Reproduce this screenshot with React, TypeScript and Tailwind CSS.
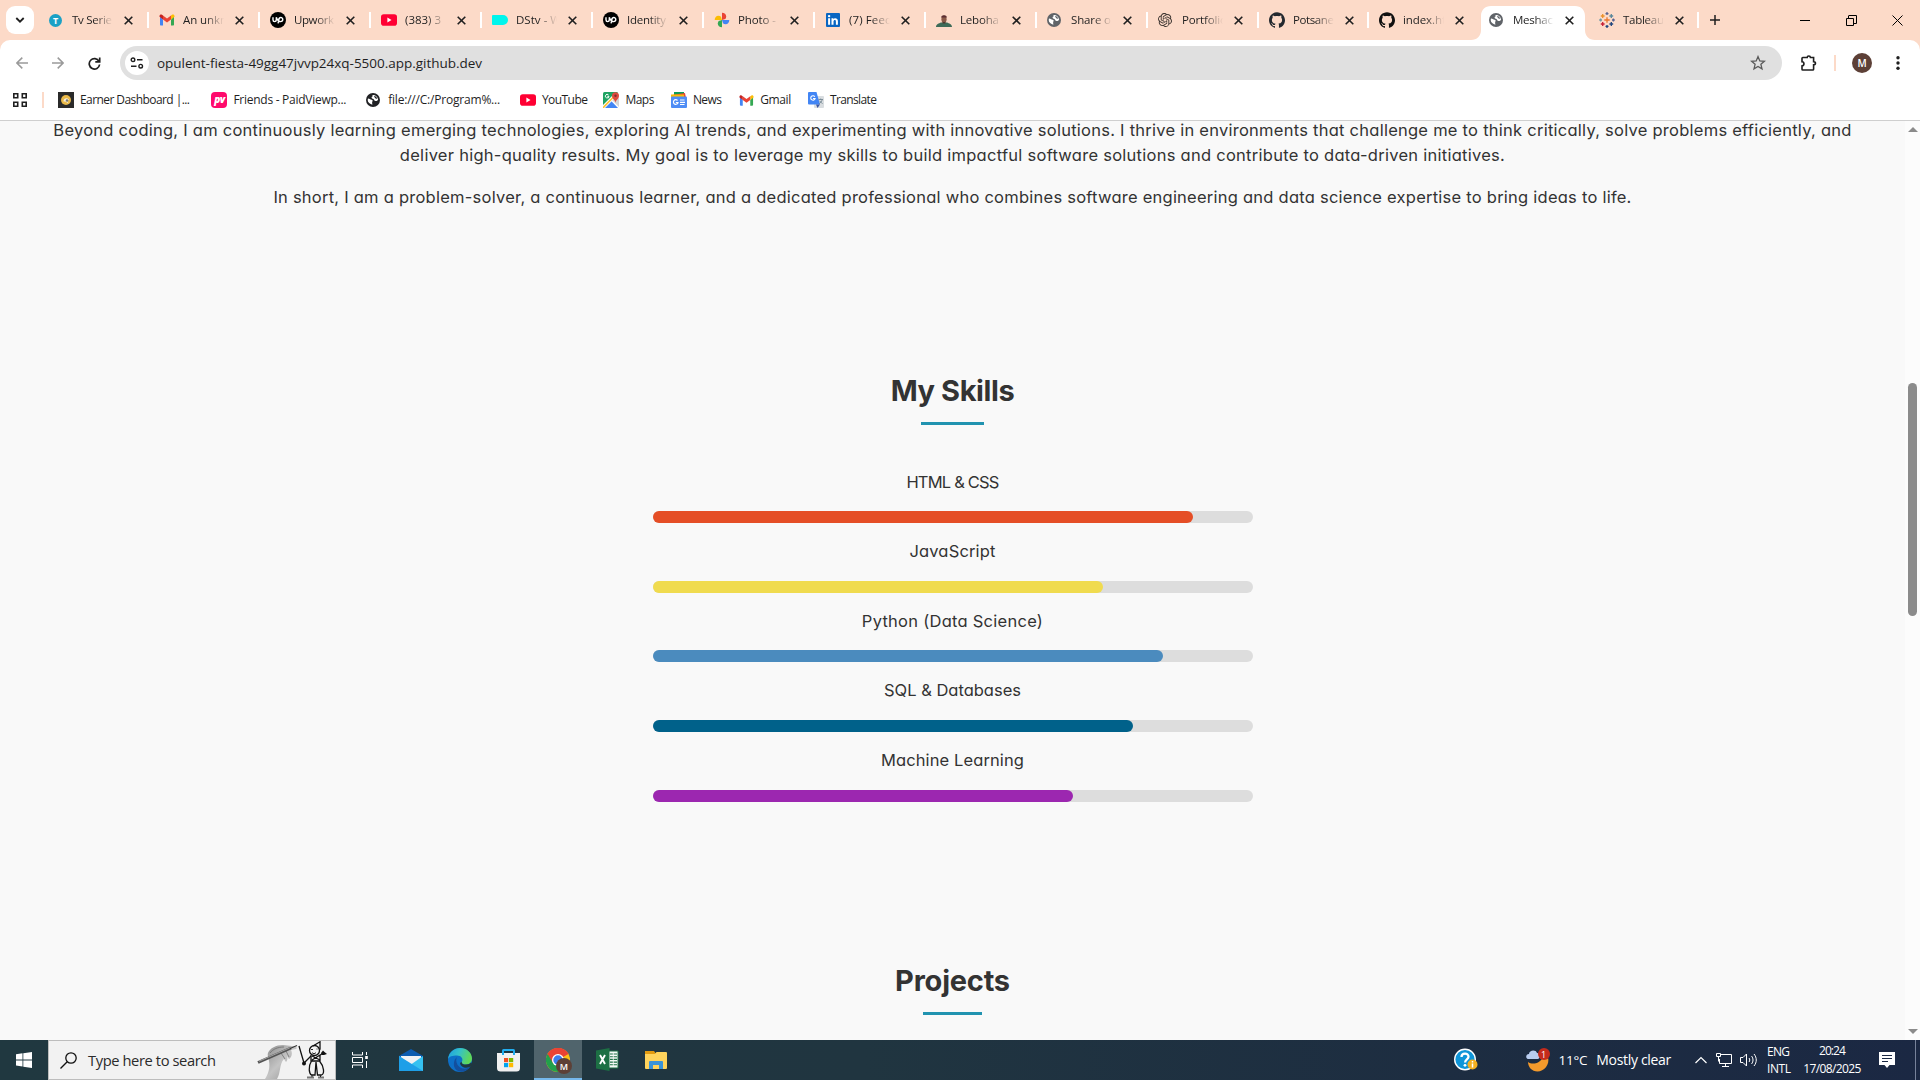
import React, { useLayoutEffect, useRef, useState } from "react";
import { SiGithub, SiOpenai } from "react-icons/si";

type FitProps = { text: string; width: number; className?: string };

/* Single line of text, tracked so that it fills the given width. */
function Fit({ text, width, className = "" }: FitProps) {
  const ref = useRef<HTMLSpanElement>(null);
  const [spacing, setSpacing] = useState(0);
  useLayoutEffect(() => {
    const measure = () => {
      const el = ref.current;
      if (!el) return;
      el.style.letterSpacing = "0px";
      const natural = el.getBoundingClientRect().width;
      const next = (width - natural) / Math.max(1, text.length - 1);
      el.style.letterSpacing = `${next}px`;
      setSpacing(next);
    };
    measure();
    document.fonts?.ready.then(measure);
  }, [text, width]);
  return (
    <span ref={ref} className={`inline-block whitespace-nowrap ${className}`} style={{ letterSpacing: spacing }}>
      {text}
    </span>
  );
}

function Globe({ color, size }: { color: string; size: number }) {
  return (
    <svg width={size} height={size} viewBox="0 0 14 14">
      <circle cx="7" cy="7" r="7" fill={color} />
      <path d="M2 5.600c1.600.2 2.200 1 3.600 1.100 1 .1 1.300.8.9 1.600-.6 1-.3 1.900-.1 3.400C4 11.300 1.700 9.300 1.700 7z" fill="#fff" />
      <path d="M6.200 2.200c2.600-.5 5.600 1.200 5.900 4.500-.8 1.300-2 1.500-3.200 1.100-1-.3-.5-1.600-1.500-1.900-1.200-.3-2-.8-1.800-1.700.2-.7 1.200-.5 1.300-1.100z" fill="#fff" />
      <path d="M8.200 3.100c1.400.2 2.500 1.100 2.900 2.500-.9.400-1.700.1-2-.5-.3-.7-1.100-.9-.9-2z" fill={color} />
    </svg>
  );
}

function GmailIcon({ size, className = "" }: { size: number; className?: string }) {
  return (
    <svg className={className} width={size} height={size} viewBox="0 0 16 16">
      <path d="M1 4.500v8c0 .6.400 1 1 1h2V7.500z" fill="#4285f4" />
      <path d="M15 4.500v8c0 .6-.4 1-1 1h-2V7.500z" fill="#34a853" />
      <path d="M12 3.500v4l3.500-2.700V4c0-1.400-1.500-2-2.500-1.200z" fill="#fbbc04" />
      <path d="M4 3.500l4 3 4-3v4l-4 3-4-3z" fill="#ea4335" />
      <path d="M.5 4.800V4C.5 2.600 2 2 3 2.800l1 .7v4z" fill="#c5221f" />
    </svg>
  );
}

function YouTubeIcon() {
  return (
    <svg width="16" height="16" viewBox="0 0 16 16">
      <rect y="2.300" width="16" height="11.400" rx="2.800" fill="#ff0033" />
      <path d="M6.400 5.600v4.800L10.500 8z" fill="#fff" />
    </svg>
  );
}

function UpworkIcon() {
  return (
    <svg width="16" height="16" viewBox="0 0 16 16">
      <circle cx="8" cy="8" r="8" fill="#000" />
      <path d="M3 5.300v2.500c0 2.400 3.300 2.400 3.300 0V5.300M6.300 5.300c.8 2.300 1.900 4.300 4.200 4.300 3 0 3-4.100.2-4.100-2 0-2 1.800-2.600 5.900" fill="none" stroke="#fff" strokeWidth="1.400" />
    </svg>
  );
}

function PhotosIcon() {
  return (
    <svg width="16" height="16" viewBox="0 0 16 16">
      <path d="M8 8V.7c2.500 0 4.200 1.500 4.200 3.700 0 1-.4 2-.9 2.600L8 8z" fill="#ea4335" />
      <path d="M8 8h7.300c0 2.500-1.500 4.200-3.700 4.200-1 0-2-.4-2.600-.9z" fill="#4285f4" />
      <path d="M8 8v7.300c-2.500 0-4.200-1.500-4.200-3.700 0-1 .4-2 .9-2.600z" fill="#34a853" />
      <path d="M8 8H.7c0-2.500 1.500-4.200 3.700-4.200 1 0 2 .4 2.600.9z" fill="#fbbc04" />
    </svg>
  );
}

function LinkedInIcon() {
  return (
    <svg width="16" height="16" viewBox="0 0 16 16">
      <rect x="1" y="1" width="14" height="14" rx="1" fill="#0a66c2" />
      <path d="M3.100 6.300h2v6.500h-2zM6.500 6.300h1.900v.9c.9-1.600 4.500-1.500 4.500 1.700v3.900h-2V9.500c0-2.200-2.400-1.900-2.400 0v3.300h-2z" fill="#fff" />
      <circle cx="4.100" cy="4.100" r="1.200" fill="#fff" />
    </svg>
  );
}

function PersonIcon() {
  return (
    <svg width="16" height="16" viewBox="0 0 16 16">
      <path d="M0 15c0-3 3-3.600 5-4.500h6c2 .9 5 1.500 5 4.500z" fill="#3d6b58" />
      <ellipse cx="8" cy="7.200" rx="2.600" ry="3.600" fill="#8a5a48" />
      <path d="M5.200 5.600C5 2.500 11 2.500 10.800 5.600z" fill="#5b2f33" />
      <path d="M6.500 10h3v1.500h-3z" fill="#4d3a30" />
    </svg>
  );
}

function TableauIcon() {
  const marks: [number, number, number, string][] = [
    [8, 8, 2.7, "#e8762c"],
    [3.7, 4, 1.9, "#eb9129"],
    [12.3, 4, 1.9, "#59879b"],
    [3.7, 12, 1.9, "#c72037"],
    [12.3, 12, 1.9, "#1f457e"],
    [8, 1.6, 1.5, "#5b6591"],
    [8, 14.4, 1.5, "#1f457e"],
    [1.6, 8, 1.4, "#7099a6"],
    [14.4, 8, 1.4, "#5b6591"],
  ];
  return (
    <svg width="16" height="16" viewBox="0 0 16 16">
      {marks.map(([x, y, r, c]) => (
        <path key={`${x}-${y}`} d={`M${x - r} ${y}h${2 * r}M${x} ${y - r}v${2 * r}`} stroke={c} strokeWidth="1.300" />
      ))}
    </svg>
  );
}

function CloseX() {
  return (
    <svg width="9" height="9" viewBox="0 0 9 9">
      <path d="M.7.7l7.600 7.600M8.300.7L.7 8.300" stroke="#1f1f1f" strokeWidth="1.600" />
    </svg>
  );
}

type Tab = { title: string; width: number; icon: React.ReactNode; active?: boolean; wide?: boolean };

const tabs: Tab[] = [
  {
    title: "Tv Serie",
    width: 40,
    wide: true,
    icon: (
      <span className="ml-[1px] flex h-[13px] w-[13px] items-center justify-center rounded-full bg-[#1ba1c5] text-[9px] font-bold leading-none text-white">
        T
      </span>
    ),
  },
  { title: "An unkn", width: 44, wide: true, icon: <GmailIcon size={16} /> },
  { title: "Upwork", width: 40, wide: true, icon: <UpworkIcon /> },
  { title: "(383) 3", width: 36, wide: true, icon: <YouTubeIcon /> },
  { title: "DStv - W", width: 45, wide: true, icon: <span className="h-[10px] w-4 rounded-l-[1px] rounded-r-[5px] bg-[#00f5ec]" /> },
  { title: "Identity", width: 39, wide: true, icon: <UpworkIcon /> },
  { title: "Photo -", width: 38, wide: true, icon: <PhotosIcon /> },
  { title: "(7) Feed", width: 43, wide: true, icon: <LinkedInIcon /> },
  { title: "Leboha", width: 39, wide: true, icon: <PersonIcon /> },
  { title: "Share o", width: 40, wide: true, icon: <Globe color="#5f6368" size={14} /> },
  { title: "Portfolio", width: 45, wide: true, icon: <SiOpenai size={14} color="#3b332f" /> },
  { title: "Potsane", width: 41, icon: <SiGithub size={16} color="#24292f" /> },
  { title: "index.ht", width: 43, icon: <SiGithub size={16} color="#111" /> },
  { title: "Meshac", width: 40, icon: <Globe color="#5f6368" size={14} />, active: true },
  { title: "Tableau", width: 41, icon: <TableauIcon /> },
];

function TabItem({ tab, separator }: { tab: Tab; separator: boolean }) {
  return (
    <div className={`relative flex h-10 shrink-0 items-center ${tab.wide ? "w-[111px]" : "w-[110px]"}`}>
      {tab.active && (
        <svg className="absolute -left-[6px] top-[6px]" width="124" height="34" viewBox="0 0 124 34">
          <path d="M0 34c6 0 10-4 10-10V10C10 4 14 0 20 0h84c6 0 10 4 10 10v14c0 6 4 10 10 10z" fill="#fff" />
        </svg>
      )}
      <span className={`h-4 w-[2px] ${separator ? "bg-white" : "bg-transparent"}`} />
      <span className="relative ml-[10px] flex w-4 items-center justify-start">{tab.icon}</span>
      <span
        className="relative ml-2 flex w-[52px] overflow-hidden text-[11.500px] leading-[18px] text-[#1f1f1f] [mask-image:linear-gradient(90deg,#000_22px,transparent_41px)]"
      >
        <Fit text={tab.title} width={tab.width} />
      </span>
      <span className="relative">
        <CloseX />
      </span>
    </div>
  );
}

function TabStrip() {
  return (
    <div className="flex h-10 items-center">
      <div className="ml-[6px] flex h-7 w-7 items-center justify-center rounded-[9px] bg-white">
        <svg width="10" height="8" viewBox="0 0 10 8">
          <path d="M1.300 2L5 5.700 8.700 2" fill="none" stroke="#1f1f1f" strokeWidth="1.800" />
        </svg>
      </div>
      <div className="ml-[2px] flex">
        {tabs.map((tab, i) => (
          <TabItem key={tab.title} tab={tab} separator={i > 0 && i < 13} />
        ))}
      </div>
      <span className="h-4 w-[2px] bg-white" />
      <svg className="ml-[11px]" width="10" height="10" viewBox="0 0 10 10">
        <path d="M5 0v10M0 5h10" stroke="#1f1f1f" strokeWidth="1.500" />
      </svg>
      <div className="ml-auto flex h-10 items-center pr-[17px]">
        <span className="h-px w-[10px] bg-black" />
        <svg className="ml-9" width="11" height="11" viewBox="0 0 11 11">
          <path d="M.5 3.500h7v7h-7zM2.500 3.500v-2.500a.5.5 0 0 1 .5-.5h7.500v8h-3" fill="none" stroke="#000" />
        </svg>
        <svg className="ml-[35px]" width="11" height="11" viewBox="0 0 11 11">
          <path d="M.5.5l10 10M10.500.5l-10 10" stroke="#000" />
        </svg>
      </div>
    </div>
  );
}

function Toolbar() {
  return (
    <div className="flex h-[46px] items-center">
      <svg className="ml-4" width="12" height="12" viewBox="0 0 12 12">
        <path d="M12 6H1M6.300.6L.9 6l5.400 5.400" fill="none" stroke="#9a9a9a" strokeWidth="1.500" />
      </svg>
      <svg className="ml-6" width="12" height="12" viewBox="0 0 12 12">
        <path d="M0 6h11M5.700.6L11.100 6l-5.400 5.400" fill="none" stroke="#9a9a9a" strokeWidth="1.500" />
      </svg>
      <svg className="ml-6" width="13" height="13" viewBox="0 0 13 13">
        <path d="M11 4.300A5.200 5.200 0 1 0 11.600 7.500M11.700.4v4.400H7.300" fill="none" stroke="#1f1f1f" strokeWidth="1.700" />
      </svg>
      <div className="ml-[19px] flex h-[34px] w-[1662px] items-center rounded-full bg-[#e0e0e0]">
        <span className="ml-[5px] flex h-6 w-6 items-center justify-center rounded-full bg-white">
          <svg width="14" height="12" viewBox="0 0 14 12" fill="none" stroke="#1f1f1f" strokeWidth="1.400">
            <circle cx="3" cy="2.800" r="1.800" />
            <path d="M7 2.800h5.500M1 9.200h5.500" />
            <circle cx="10.700" cy="9.200" r="1.800" />
          </svg>
        </span>
        <Fit text="opulent-fiesta-49gg47jvvp24xq-5500.app.github.dev" width={325} className="ml-2 text-[13.500px] leading-5 text-[#1f1f1f]" />
        <svg className="ml-auto mr-[16px]" width="16" height="16" viewBox="0 0 16 16">
          <path d="M8 1.600l1.800 4.300 4.600.4-3.500 3 1.100 4.500L8 11.400l-4 2.400 1.100-4.500-3.500-3 4.600-.4z" fill="none" stroke="#5a5a5a" strokeWidth="1.300" />
        </svg>
      </div>
      <svg className="ml-[18px]" width="18" height="18" viewBox="0 0 18 18">
        <path
          d="M2.800 3.500h4.400c0-2 3.200-2 3.200 0h3.200v4.200c2.500 0 2.500 3.200 0 3.200v4.300c0 .5-.3.800-.8.800h-10c-.5 0-.8-.3-.8-.8v-3.300c2.600-.2 2.600-4 0-4.200V4.300c0-.5.300-.8.8-.8z"
          fill="none"
          stroke="#1f1f1f"
          strokeWidth="1.600"
        />
      </svg>
      <span className="ml-4 h-4 w-[2px] bg-[#fcdac8]" />
      <span className="ml-4 flex h-5 w-5 items-center justify-center rounded-full bg-[#5d4037] text-[10px] font-semibold text-white">M</span>
      <svg className="ml-[24px]" width="4" height="14" viewBox="0 0 4 14" fill="#1f1f1f">
        <circle cx="2" cy="1.700" r="1.700" />
        <circle cx="2" cy="7" r="1.700" />
        <circle cx="2" cy="12.300" r="1.700" />
      </svg>
    </div>
  );
}

function Bookmark({ icon, text, width, gap }: { icon: React.ReactNode; text: string; width: number; gap: string }) {
  return (
    <div className={`flex items-center ${gap}`}>
      <span className="flex w-[22px] items-center">{icon}</span>
      <Fit text={text} width={width} className="text-[12px] leading-[18px] text-[#1f1f1f]" />
    </div>
  );
}

function BookmarksBar() {
  return (
    <div className="flex h-[34px] items-center pb-[6px]">
      <svg className="ml-[13px]" width="14" height="14" viewBox="0 0 14 14" fill="none" stroke="#1f1f1f" strokeWidth="1.600">
        <path d="M.8.8h3.900v3.900H.8zM9.300.8h3.900v3.900H9.300zM.8 9.300h3.900v3.900H.8zM9.300 9.300h3.900v3.900H9.300z" />
      </svg>
      <span className="ml-[15px] h-4 w-[2px] bg-[#fcdac8]" />
      <Bookmark
        gap="ml-[14px]"
        text="Earner Dashboard |..."
        width={110}
        icon={
          <svg width="16" height="16" viewBox="0 0 16 16">
            <rect width="16" height="16" fill="#2a2a2a" />
            <circle cx="8" cy="8" r="5" fill="#e9b949" />
            <path d="M5.500 9.500c0-4 4.500-4 5.500-1.500l-2 .5 1.500 3-3-2z" fill="#f5efe0" />
            <circle cx="9" cy="8.500" r="1.200" fill="#777" />
          </svg>
        }
      />
      <Bookmark
        gap="ml-[22px]"
        text="Friends - PaidViewp..."
        width={113}
        icon={
          <span className="flex h-4 w-4 items-center justify-center rounded-[4px] bg-[#ff0a6c] pb-[2px] text-[10px] font-extrabold italic leading-none tracking-[-0.500px] text-white">
            pv
          </span>
        }
      />
      <Bookmark gap="ml-[20px]" text="file:///C:/Program%..." width={112} icon={<Globe color="#202124" size={14} />} />
      <Bookmark gap="ml-[20px]" text="YouTube" width={46} icon={<YouTubeIcon />} />
      <Bookmark
        gap="ml-[16px]"
        text="Maps"
        width={29}
        icon={
          <svg width="16" height="16" viewBox="0 0 16 16">
            <path d="M0 1.500Q0 0 1.500 0H15L1.500 16Q0 16 0 14.500z" fill="#1ea362" />
            <path d="M1 16L8 8.800 15 16z" fill="#4285f4" />
            <path d="M0 13L11 2l3 2L2 16H0z" fill="#fff" />
            <path d="M0 14.500L10 4.500l1 1L1 16H0z" fill="#fbc02d" />
            <path d="M9 8l7 7V5z" fill="#d5d5d5" />
            <path d="M12.500 11c0-3-3.500-4-3.500-7.300a3.500 3.500 0 0 1 7 0C16 7 12.500 8 12.500 11z" fill="#dd4b3e" />
            <circle cx="12.500" cy="3.800" r="1.200" fill="#822f2b" />
            <path d="M5.500 2.900A1.800 1.800 0 1 0 6 4.300H4.300" fill="none" stroke="#fff" />
          </svg>
        }
      />
      <Bookmark
        gap="ml-[17px]"
        text="News"
        width={29}
        icon={
          <svg width="16" height="16" viewBox="0 0 16 16">
            <rect x="3" width="10" height="6" fill="#0c9d58" />
            <path d="M1 3l13-2 1 5H1z" fill="#ea4335" />
            <path d="M0 2.500h13V8H0z" fill="#fbbc04" />
            <rect y="4.500" width="16" height="11.500" rx="1" fill="#4f8df5" />
            <path d="M6.500 8.500A2.300 2.300 0 1 0 7 10.500H4.800M9 8h4.500M9 10.300h5M9 12.500h4.500" fill="none" stroke="#fff" strokeWidth="1.200" />
          </svg>
        }
      />
      <Bookmark gap="ml-[17px]" text="Gmail" width={31} icon={<GmailIcon className="ml-[1px]" size={15} />} />
      <Bookmark
        gap="ml-[17px]"
        text="Translate"
        width={47}
        icon={
          <svg width="16" height="16" viewBox="0 0 16 16">
            <rect x="6" y="4" width="10" height="12" rx="1" fill="#d9dde0" />
            <path d="M1 0h7.500l3.500 12.500H1q-1 0-1-1V1q0-1 1-1z" fill="#4285f4" />
            <path d="M8 12.500h4L9.500 16z" fill="#3a57a5" />
            <path d="M6.800 4.700A2.200 2.200 0 1 0 7.100 6.500H5" fill="none" stroke="#fff" strokeWidth="1.100" />
            <path d="M10.500 7.500h4.500M12.700 6.500v1M14.200 7.600c-.5 2-1.500 3-3 4M11.500 8.800l3 3" fill="none" stroke="#6b7f8c" strokeWidth=".8" />
          </svg>
        }
      />
    </div>
  );
}

const skills = [
  { name: "HTML & CSS", width: 93, level: "w-[90%]", color: "bg-[#e54e26]" },
  { name: "JavaScript", width: 86, level: "w-3/4", color: "bg-[#f0db4f]" },
  { name: "Python (Data Science)", width: 181, level: "w-[85%]", color: "bg-[#4b8bbe]" },
  { name: "SQL & Databases", width: 137, level: "w-4/5", color: "bg-[#00618a]" },
  { name: "Machine Learning", width: 143, level: "w-[70%]", color: "bg-[#9c27b0]" },
];

function Page() {
  return (
    <main className="flex min-w-0 flex-1 flex-col items-center bg-[#f9f9f9] font-[Inter,sans-serif] text-[16.500px] leading-[25.600px] text-[#333] [font-feature-settings:'cv11']">
      <p className="mt-[-3.500px] flex flex-col items-center leading-[25px]">
        <Fit
          width={1798}
          text="Beyond coding, I am continuously learning emerging technologies, exploring AI trends, and experimenting with innovative solutions. I thrive in environments that challenge me to think critically, solve problems efficiently, and"
        />
        <Fit
          width={1105}
          text="deliver high-quality results. My goal is to leverage my skills to build impactful software solutions and contribute to data-driven initiatives."
        />
      </p>
      <p className="mt-[17px] h-[25.600px]">
        <Fit
          width={1358}
          text="In short, I am a problem-solver, a continuous learner, and a dedicated professional who combines software engineering and data science expertise to bring ideas to life."
        />
      </p>
      <h2 className="mt-[158.900px] flex h-[46px] items-center pb-[2px] text-[29px] font-bold">
        <Fit text="My Skills" width={124} />
      </h2>
      <div className="mt-[7px] h-[3px] w-[63px] bg-[#2193b0]" />
      <div className="mt-[28.700px] flex w-[600px] flex-col">
        {skills.map((s) => (
          <div key={s.name} className="flex flex-col pt-4 text-center">
            <p className="h-[25.600px]">
              <Fit text={s.name} width={s.width} />
            </p>
            <div className="mt-4 h-3 rounded-[6px] bg-[#ddd]">
              <div className={`h-3 rounded-[6px] ${s.level} ${s.color}`} />
            </div>
          </div>
        ))}
      </div>
      <h2 className="mt-[157.300px] flex h-[46px] items-center pb-[2px] text-[29px] font-bold">
        <Fit text="Projects" width={115} />
      </h2>
      <div className="mt-[7px] h-[3px] w-[59px] bg-[#2193b0]" />
    </main>
  );
}

function Scrollbar() {
  return (
    <div className="flex w-[15px] flex-col items-center bg-[#fcfcfc] py-[6px]">
      <svg width="10" height="5" viewBox="0 0 10 5">
        <path d="M0 5L5 0l5 5z" fill="#8b8b8b" />
      </svg>
      <span className="mt-[251px] h-[233px] w-[9px] rounded-full bg-[#8b8b8b]" />
      <svg className="mt-auto" width="10" height="5" viewBox="0 0 10 5">
        <path d="M0 0l5 5 5-5z" fill="#8b8b8b" />
      </svg>
    </div>
  );
}

function SearchArt() {
  return (
    <svg className="ml-auto mr-[6px]" width="72" height="38" viewBox="0 0 72 38">
      <defs>
        <linearGradient id="hand" x1="0" y1="0" x2="1" y2="1">
          <stop offset="0" stopColor="#8a8a8a" />
          <stop offset=".5" stopColor="#c4c4c4" />
          <stop offset="1" stopColor="#8f8f8f" />
        </linearGradient>
      </defs>
      <path d="M8 38c4-6 5-12 4-18 0-3-2-5-1-8 2-5 8-8 15-8l9 1c4 0 6 2 4 3l-5 1c2 4 0 8-2 9l-2-3c1 3 0 5-1 6l-2-3c-5 5-3 14-7 20z" fill="url(#hand)" />
      <path d="M24 12l4 6M29 10l3 6M13 12c3-4 8-6 14-6" stroke="#6e6e6e" strokeWidth=".8" fill="none" />
      <path d="M1 21.500L34 7" stroke="#555" strokeWidth="3" />
      <path d="M2 20.300L34 6.300" stroke="#aaa" strokeWidth=".9" />
      <path d="M33 7.500l7-3" stroke="#333" strokeWidth="1.200" />
      <g fill="none" stroke="#111" strokeWidth="1.300">
        <path d="M42 5l5 17M47 22l7-7" />
        <circle cx="57.500" cy="9.500" r="5" />
        <path d="M56 5L63 .8v8" />
        <path d="M55 15l8 4M55 19l8-5M54 14v6h9v-6M62 15l4-3M54.500 20c-4 6-2 13 0 14h3.500l1-13M62.500 20c5 6 5 13 2 14h-4l-1.500-13" />
        <path d="M54 8.500h2M59.500 8h1M55 11.500c1 1.500 3 1.500 4 0" strokeWidth=".9" />
      </g>
      <circle cx="47" cy="22.500" r="2" fill="#111" />
      <path d="M66 9.500l1.500 1.500 2.500 2-3 1-2 0-1-2z" fill="#111" />
      <path d="M50 36.500h7M61 36.500h6" stroke="#777" strokeWidth="2" />
      <path d="M55 34v2M63.500 34v2" stroke="#222" strokeWidth="1" />
    </svg>
  );
}

function PinnedApps() {
  return (
    <div className="flex h-10 items-center">
      <svg className="ml-4" width="16" height="16" viewBox="0 0 16 16" fill="none" stroke="#fff">
        <path d="M.5 0v3h10V0M.5 16v-3h10v3M.5 5.500h10v5H.5zM14.500 0v3M14.500 9v7" />
        <path d="M13.200 4h2.600v3h-2.600z" fill="#fff" stroke="none" />
      </svg>
      <svg className="ml-[31px]" width="24" height="24" viewBox="0 0 24 24">
        <path d="M0 8L12 1l12 7v4H0z" fill="#0a5bb0" />
        <path d="M2 8h20v5l-10 6L2 13z" fill="#eef1f4" />
        <path d="M0 8l12 8.500L24 8v15H0z" fill="#35c1f1" />
        <path d="M0 23V8l24 15z" fill="#1e9fe8" />
      </svg>
      <svg className="ml-[25px]" width="24" height="24" viewBox="0 0 24 24">
        <defs>
          <linearGradient id="edgeTop" x1="0" y1="0" x2="1" y2="0.300">
            <stop offset="0" stopColor="#1b9de2" />
            <stop offset=".5" stopColor="#35c1c9" />
            <stop offset="1" stopColor="#5fd85a" />
          </linearGradient>
        </defs>
        <circle cx="12" cy="12" r="12" fill="#0d6fc7" />
        <path d="M0 11C1 4 6 0 12 0c7 0 12 5 12 10.500 0 4-3 6-6 6-3.500 0-5-1.500-4-3 1.500-3-1-6-5-6-4.500 0-8 1-9 3.500z" fill="url(#edgeTop)" />
        <path d="M9 9c-2 4 0 9 4 11 4 1.500 7 .5 9.500-2C19 25 8 26 6 18c-.5-4 .5-7 3-9z" fill="#134f9e" />
        <path d="M14 13.500c-1 1.500.5 3 4 3 2.500 0 4-.8 5-2l1.500 2-3 2.500c-4 2-9 0-9.500-4z" fill="#203840" />
      </svg>
      <svg className="ml-[25px]" width="23" height="24" viewBox="0 0 23 24">
        <path d="M6 7V2.500Q6 2 6.500 2h10q.5 0 .5.500V7" fill="none" stroke="#22aef0" strokeWidth="2" />
        <path d="M0 5h23v15q0 3.500-3.500 3.500h-16Q0 23.500 0 20z" fill="#f1f1f1" />
        <path d="M6 5v2M17 5v2" stroke="#22aef0" strokeWidth="2" />
        <path d="M7 10h4.200v4.200H7z" fill="#f25022" />
        <path d="M12 10h4.200v4.200H12z" fill="#7fba00" />
        <path d="M7 15h4.200v4.200H7z" fill="#00a4ef" />
        <path d="M12 15h4.200v4.200H12z" fill="#ffb900" />
      </svg>
      <div className="ml-[14px] flex h-10 w-12 items-center justify-center border-b-2 border-[#76b9ed] bg-[#50646c] pt-[2px]">
        <div className="relative h-6 w-6">
          <svg width="24" height="24" viewBox="0 0 24 24">
            <circle cx="12" cy="12" r="12" fill="#fbc116" />
            <path d="M12 12L1.600 6A12 12 0 0 1 22.400 6z" fill="#ea4335" />
            <path d="M1.600 6A12 12 0 0 0 12 24l5.200-9L12 12z" fill="#22a04b" />
            <path d="M12 6h10.400A12 12 0 0 0 1.600 6L7 15z" fill="#ea4335" />
            <circle cx="12" cy="12" r="6" fill="#fff" />
            <circle cx="12" cy="12" r="4.700" fill="#3b7ded" />
          </svg>
          <span className="absolute left-[10px] top-[10px] flex h-4 w-4 items-center justify-center rounded-full bg-[#5d4037] text-[9px] font-semibold leading-none text-white">
            M
          </span>
        </div>
      </div>
      <svg className="ml-[14px]" width="23" height="24" viewBox="0 0 23 24">
        <path d="M12 3h10v17H12z" fill="#f4f9f6" stroke="#1d7044" />
        <path d="M14 6h7M14 8.700h7M14 11.400h7M14 14.100h7M14 16.800h7" stroke="#1d7044" strokeWidth="1.100" />
        <path d="M17.300 5v13" stroke="#f4f9f6" strokeWidth=".8" />
        <path d="M0 2.500L13.500 0v23L0 20.500z" fill="#1d7044" />
        <path d="M4 7l5 9M9 7l-5 9" stroke="#fff" strokeWidth="1.900" />
      </svg>
      <svg className="ml-[26px]" width="22" height="20" viewBox="0 0 22 20">
        <path d="M0 1h9l1.500 2H22v4H0z" fill="#e39b10" />
        <path d="M0 4h10l1.500-2H21q1 0 1 1v15q0 1-1 1H1q-1 0-1-1z" fill="#ffd35c" />
        <path d="M4 19v-7q0-1 1-1h12q1 0 1 1v7h-4v-4H8v4z" fill="#3a93d8" />
      </svg>
    </div>
  );
}

function Tray() {
  return (
    <div className="ml-auto flex h-10 items-center text-white">
      <svg width="24" height="24" viewBox="0 0 24 24">
        <circle cx="11" cy="11.500" r="10.300" fill="#0f95d8" stroke="#fff" strokeWidth="1.400" />
        <path d="M7.500 9c0-4.500 7-4.500 7-.3 0 2.800-3.400 2.600-3.400 5.800" fill="none" stroke="#fff" strokeWidth="2.300" />
        <circle cx="11" cy="17.300" r="1.400" fill="#fff" />
        <circle cx="18.500" cy="16.500" r="5" fill="#f5b021" />
        <path d="M18.500 15.500v4M18.500 13v1.400" stroke="#fff" strokeWidth="1.500" />
      </svg>
      <div className="relative ml-12 h-6 w-6">
        <svg width="24" height="24" viewBox="0 0 24 24">
          <path d="M2 14c4 3 12 2 15-5 1-1 2-2 5 0 2 8-4 14.500-10.500 14.500C6 23.500 2 19 2 14z" fill="#f39a2c" />
          <path d="M2 11C-1 10 0 6 3 6c0-4 7-5 8-1 3 0 4 4 1 6z" fill="#b9cdf0" />
        </svg>
        <span className="absolute left-3 top-0 flex h-3 w-3 items-center justify-center rounded-full bg-[#c42b1c] text-[9px] leading-none">1</span>
      </div>
      <Fit text="11°C" width={29} className="ml-[9px] text-[13.500px] leading-5" />
      <Fit text="Mostly clear" width={75} className="ml-[9px] text-[14px] leading-5" />
      <svg className="ml-6" width="12" height="8" viewBox="0 0 12 8">
        <path d="M.5 7L6 1.500 11.500 7" fill="none" stroke="#fff" strokeWidth="1.200" />
      </svg>
      <svg className="ml-[9px]" width="16" height="14" viewBox="0 0 16 14" fill="none" stroke="#fff">
        <path d="M5 1.500h10.500v9H3.500V6M9.500 10.500v3M6 13.500h7M.5.500h4v3h-4zM2.500 3.500v5" />
      </svg>
      <svg className="ml-[8px]" width="18" height="14" viewBox="0 0 18 14" fill="none" stroke="#fff">
        <path d="M.5 4.500h2.500L6.500 1v12L3 9.500H.5zM9 5c1 1.200 1 2.800 0 4M11.500 3c2 2.400 2 5.600 0 8M14 1c3 3.700 3 8.300 0 12" />
      </svg>
      <div className="ml-[9px] flex w-6 flex-col text-[12px] leading-[17px]">
        <Fit text="ENG" width={23} className="self-start" />
        <Fit text="INTL" width={24} className="self-start" />
      </div>
      <div className="ml-3 flex w-[58px] flex-col items-center pb-[1px] text-[12px] leading-[18px]">
        <Fit text="20:24" width={27} />
        <Fit text="17/08/2025" width={58} />
      </div>
      <svg className="ml-[18px]" width="16" height="16" viewBox="0 0 16 16">
        <path d="M0 0h16v13h-5.500L8 16l-2.500-3H0z" fill="#fff" />
        <path d="M3 3.500h10M3 6.500h10M3 9.500h6" stroke="#1b2944" />
      </svg>
      <span className="ml-5 mr-1 h-10 w-px bg-[#77829a]" />
    </div>
  );
}

function Taskbar() {
  return (
    <footer className="flex h-10 items-center bg-[linear-gradient(90deg,#203840_0%,#203540_45%,#1d2d41_75%,#1b2843_100%)]">
      <div className="flex w-12 justify-center">
        <svg width="16" height="16" viewBox="0 0 16 16" fill="#fff">
          <path d="M0 2.300l6.500-1v6.200H0zM7.300 1.200L16 0v7.500H7.300zM0 8.400h6.500v6.200l-6.500-1zM7.300 8.400H16V16l-8.700-1.200z" />
        </svg>
      </div>
      <div className="flex h-10 w-72 items-center border border-[#bdbdbd] bg-[#f2f2f2]">
        <svg className="ml-[11px]" width="17" height="17" viewBox="0 0 17 17">
          <circle cx="11" cy="6" r="5.200" fill="none" stroke="#111" strokeWidth="1.300" />
          <path d="M7.200 9.800L.5 16.500" stroke="#111" strokeWidth="1.300" />
        </svg>
        <Fit text="Type here to search" width={128} className="ml-[11px] text-[14.700px] leading-5 text-[#2b2b2b]" />
        <SearchArt />
      </div>
      <PinnedApps />
      <Tray />
    </footer>
  );
}

export default function App() {
  return (
    <div className="flex h-[1080px] w-[1920px] flex-col overflow-hidden bg-[#fcdac8] font-['Open_Sans',sans-serif]">
      <TabStrip />
      <div className="h-[81px] shrink-0 rounded-t-[10px] border-b border-[#cfcfcf] bg-white">
        <Toolbar />
        <BookmarksBar />
      </div>
      <div className="flex h-[919px] overflow-hidden">
        <Page />
        <Scrollbar />
      </div>
      <Taskbar />
    </div>
  );
}
